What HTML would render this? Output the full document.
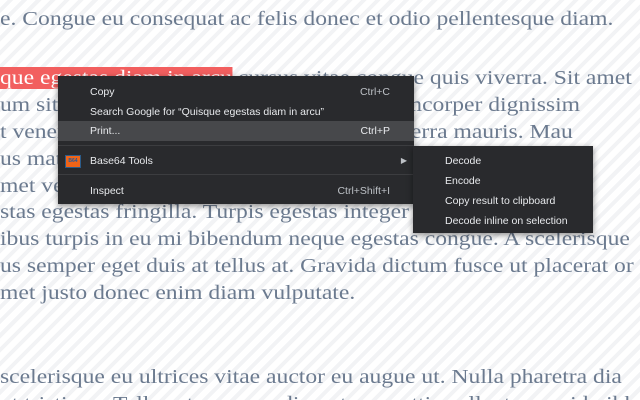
<!DOCTYPE html>
<html><head><meta charset="utf-8"><style>
html,body{margin:0;padding:0;width:640px;height:400px;overflow:hidden}
body{background:repeating-linear-gradient(-45deg,#ffffff 0 6px,#f2f3f5 6px 10px);font-family:"Liberation Serif",serif;color:#6b7a8f;position:relative}
.l{position:absolute;left:0;font-size:20px;white-space:nowrap;line-height:26px;transform:scaleX(1.18);transform-origin:0 0}
.hl{background:#f25f5f;color:#fff}
.menu{position:absolute;background:#292a2d;box-shadow:0 2px 6px rgba(0,0,0,.45);font-family:"Liberation Sans",sans-serif;font-size:10.5px;color:#e8eaed}
.it{position:absolute;left:0;right:0;height:20px;line-height:20px}
.it span{position:absolute}
.sep{position:absolute;left:0;right:0;height:1px;background:#3c3d40}
</style></head><body>
<div class="l" style="top:6px">e. Congue eu consequat ac felis donec et odio pellentesque diam.</div>
<div class="l" style="top:65px"><span class="hl">que egestas diam in arcu</span> cursus vitae congue quis viverra. Sit amet</div>
<div class="l" style="top:92px">um sit amet consectetur adipiscing elit ullamcorper dignissim</div>
<div class="l" style="top:119px">t venenatis urna cursus eget nunc neque viverra mauris. Mau</div>
<div class="l" style="top:146px">us mattis rhoncus urna neque viverra justo nec dignissim en</div>
<div class="l" style="top:173px">met venenatis urna cursus eget nunc scelerisque odio do sed</div>
<div class="l" style="top:199px">stas egestas fringilla. Turpis egestas integer eget aliquet</div>
<div class="l" style="top:226px">ibus turpis in eu mi bibendum neque egestas congue. A scelerisque</div>
<div class="l" style="top:253px">us semper eget duis at tellus at. Gravida dictum fusce ut placerat or</div>
<div class="l" style="top:280px">met justo donec enim diam vulputate.</div>
<div class="l" style="top:364px">scelerisque eu ultrices vitae auctor eu augue ut. Nulla pharetra dia</div>
<div class="l" style="top:391px">ut tristique. Tellus at urna condimentum mattis pellentesque id nibh</div>

<div class="menu" style="left:58px;top:76px;width:356px;height:128px">
  <div class="it" style="top:6px"><span style="left:32px">Copy</span><span style="right:24px;color:#bdc1c6">Ctrl+C</span></div>
  <div class="it" style="top:26px"><span style="left:32px">Search Google for “Quisque egestas diam in arcu”</span></div>
  <div class="it" style="top:45px;background:#47484b"><span style="left:32px">Print...</span><span style="right:24px;color:#e8eaed">Ctrl+P</span></div>
  <div class="sep" style="top:69px"></div>
  <div class="it" style="top:75px"><span style="left:7px;top:4px;width:14px;height:11px;background:#f06418;border:1px solid #2b5c8a;font-size:5px;line-height:11px;text-align:center;color:#1d5ba0;font-weight:bold">B64</span><span style="left:32px">Base64 Tools</span><span style="right:7px;font-size:8px;color:#bdc1c6">▶</span></div>
  <div class="sep" style="top:98px"></div>
  <div class="it" style="top:105px"><span style="left:32px">Inspect</span><span style="right:24px;color:#bdc1c6">Ctrl+Shift+I</span></div>
</div>
<div class="menu" style="left:413px;top:146px;width:180px;height:87px">
  <div class="it" style="top:5px"><span style="left:32px">Decode</span></div>
  <div class="it" style="top:25px"><span style="left:32px">Encode</span></div>
  <div class="it" style="top:45px"><span style="left:32px">Copy result to clipboard</span></div>
  <div class="it" style="top:65px"><span style="left:32px">Decode inline on selection</span></div>
</div>
</body></html>
